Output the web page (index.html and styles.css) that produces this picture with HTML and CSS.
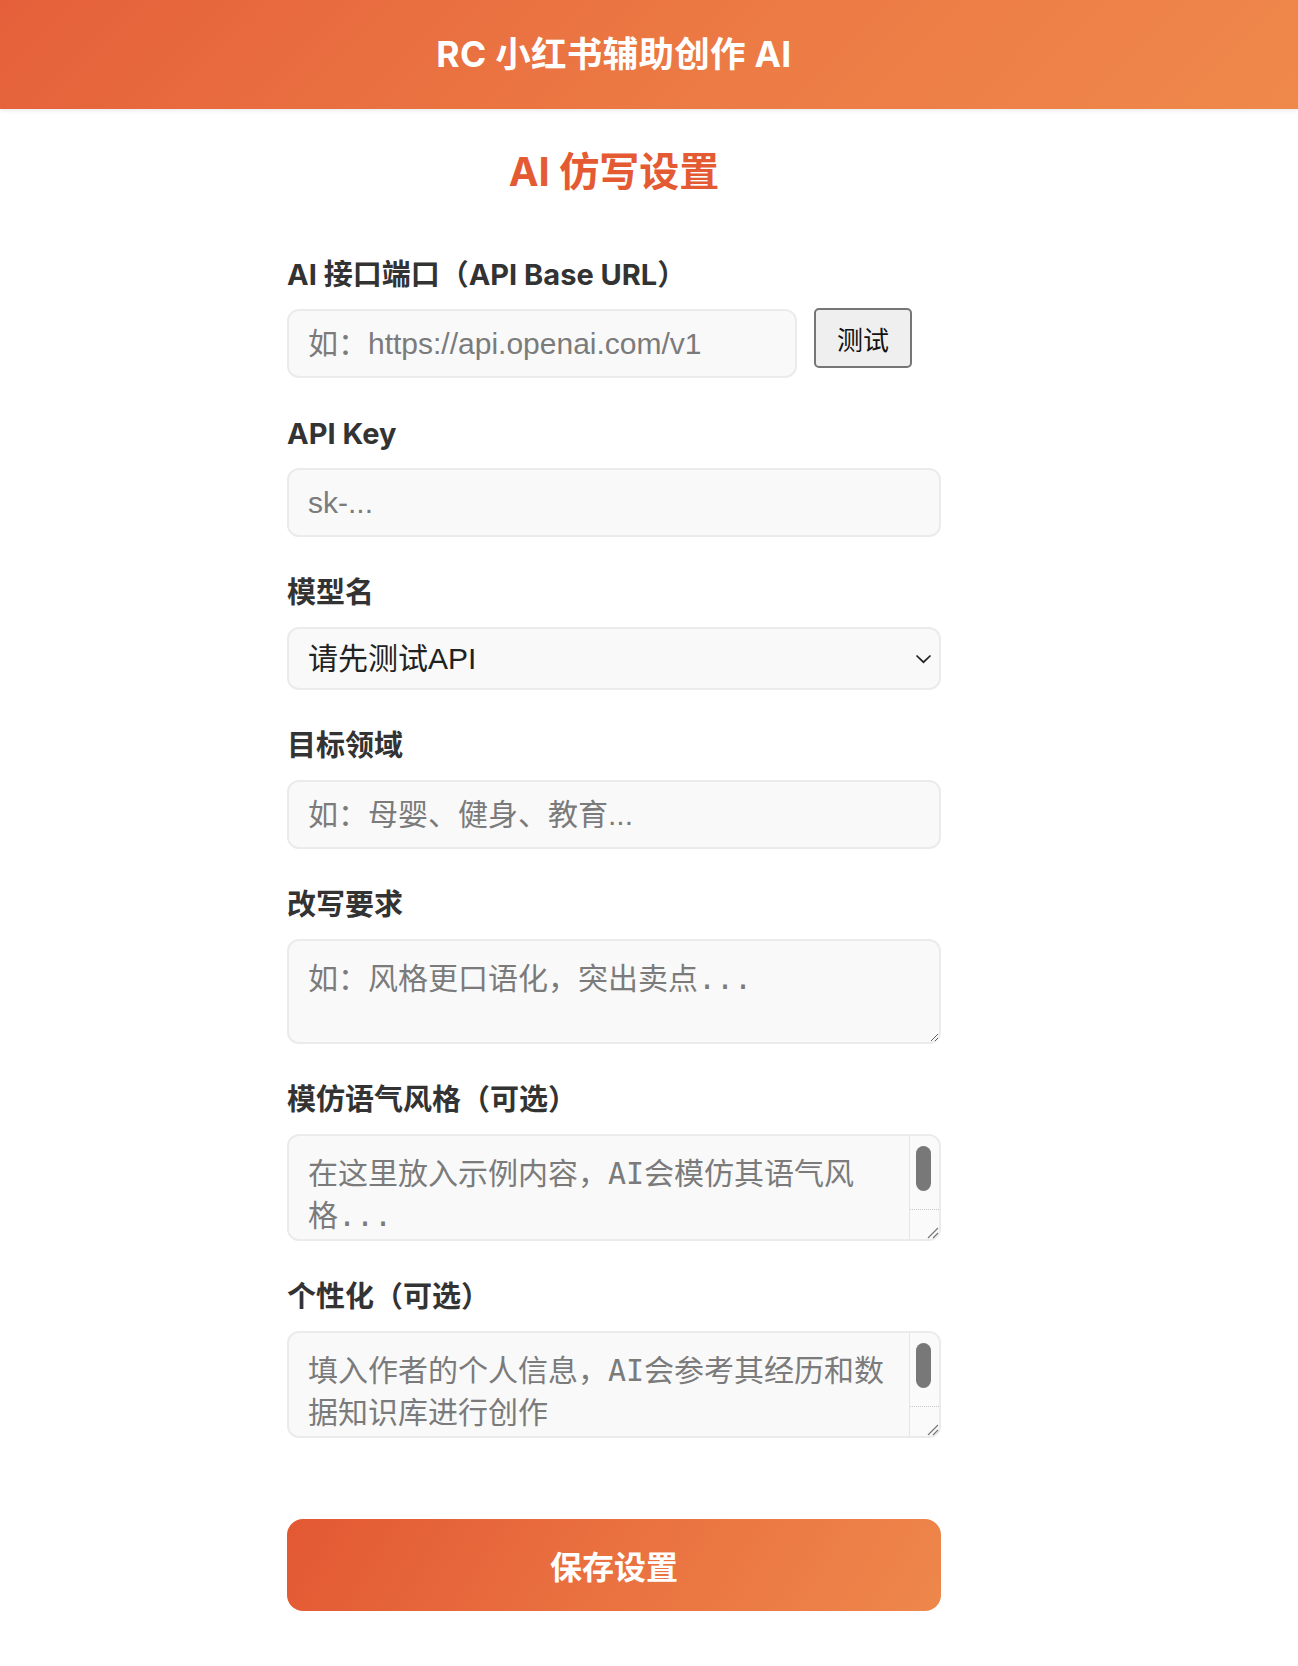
FILE: index.html
```html
<!DOCTYPE html>
<html lang="zh-CN">
<head>
    <meta charset="UTF-8">
    <meta name="viewport" content="width=device-width, initial-scale=1.0">
    <title>RC 小红书辅助创作 AI</title>
    <link rel="stylesheet" href="styles.css">
</head>

<body>
<header class="topbar">
    <h1>RC 小红书辅助创作 AI</h1>
</header>

<main class="settings">
    <h2 class="settings-title">AI 仿写设置</h2>

    <form id="settingsForm" class="settings-form">
        <div class="field">
            <label for="apiBase">AI 接口端口（API Base URL）</label>
            <div class="inline-row">
                <input type="text" id="apiBase" class="text-input base-input" placeholder="如：https://api.openai.com/v1">
                <button type="button" class="test-button">测试</button>
            </div>
        </div>

        <div class="field">
            <label for="apiKey">API Key</label>
            <input type="text" id="apiKey" class="text-input" placeholder="sk-...">
        </div>

        <div class="field">
            <label for="model">模型名</label>
            <div class="select-wrap">
                <select id="model" class="select-input">
                    <option>请先测试API</option>
                </select>
                <svg class="select-arrow" width="17" height="10" viewBox="0 0 17 10">
                    <path d="M1.5 1.5 L8.5 8.2 L15.5 1.5" fill="none" stroke="#222" stroke-width="1.7"/>
                </svg>
            </div>
        </div>

        <div class="field">
            <label for="domain">目标领域</label>
            <input type="text" id="domain" class="text-input" placeholder="如：母婴、健身、教育...">
        </div>

        <div class="field">
            <label for="rewrite">改写要求</label>
            <textarea id="rewrite" class="text-area" placeholder="如：风格更口语化，突出卖点..."></textarea>
        </div>

        <div class="field">
            <label for="tone">模仿语气风格（可选）</label>
            <div class="area-wrap">
                <textarea id="tone" class="text-area long-area" placeholder="在这里放入示例内容，AI会模仿其语气风格..."></textarea>
                <div class="scroll-rail">
                    <span class="scroll-thumb"></span>
                    <span class="scroll-corner">
                        <svg width="14" height="14" viewBox="0 0 14 14">
                            <path d="M3 13 L13 3 M8 13 L13 8" stroke="#777" stroke-width="1.2"/>
                        </svg>
                    </span>
                </div>
            </div>
        </div>

        <div class="field">
            <label for="persona">个性化（可选）</label>
            <div class="area-wrap">
                <textarea id="persona" class="text-area long-area" placeholder="填入作者的个人信息，AI会参考其经历和数据知识库进行创作"></textarea>
                <div class="scroll-rail">
                    <span class="scroll-thumb"></span>
                    <span class="scroll-corner">
                        <svg width="14" height="14" viewBox="0 0 14 14">
                            <path d="M3 13 L13 3 M8 13 L13 8" stroke="#777" stroke-width="1.2"/>
                        </svg>
                    </span>
                </div>
            </div>
        </div>

        <button type="submit" class="save-button">保存设置</button>
    </form>
</main>
</body>
</html>
```

FILE: styles.css
```css
body {
    margin: 0;
    background-color: #ffffff;
    font-family: "Inter", "Noto Sans CJK SC", sans-serif;
    color: #333333;
}

.topbar {
    height: 109px;
    box-sizing: border-box;
    padding: 0 70px 6px 0;
    display: flex;
    align-items: center;
    justify-content: center;
    background: linear-gradient(135deg, #e5603a 0%, #ec7a44 55%, #ef884b 100%);
    box-shadow: 0 2px 4px rgba(0, 0, 0, 0.08);
}

.topbar h1 {
    margin: 0;
    font-size: 35.5px;
    font-weight: 700;
    color: #ffffff;
    letter-spacing: 0.3px;
}

.settings {
    width: 654px;
    margin: 0 auto;
    padding-right: 70px;
}

.settings-title {
    margin: 38px 0 58px;
    font-size: 40px;
    line-height: 50px;
    font-weight: 700;
    color: #e45a32;
    text-align: center;
}

.field {
    margin-bottom: 36px;
}

.field label {
    display: block;
    margin-bottom: 14px;
    font-size: 29px;
    line-height: 40px;
    font-weight: 700;
    color: #333333;
}

.inline-row {
    display: flex;
    align-items: flex-start;
    gap: 17px;
}

.text-input,
.select-input,
.text-area {
    display: block;
    width: 100%;
    box-sizing: border-box;
    border: 2px solid #ebebeb;
    border-radius: 12px;
    background-color: #f9f9f9;
    color: #222222;
    outline: none;
}

.text-input,
.select-input {
    padding: 0 19px;
    font-family: "Liberation Sans", "Noto Sans CJK SC", sans-serif;
    font-size: 30px;
}

.text-input {
    height: 69px;
}

.base-input {
    width: 510px;
    flex: none;
}

.text-input::placeholder,
.text-area::placeholder {
    color: #7b7b7b;
}

.test-button {
    height: 60px;
    margin-top: -1px;
    padding: 0 21px;
    border: 2px solid #767676;
    border-radius: 5px;
    background-color: #efefef;
    color: #111111;
    font-family: "Liberation Sans", "Noto Sans CJK SC", sans-serif;
    font-size: 26px;
    cursor: pointer;
}

.select-wrap {
    position: relative;
}

.select-input {
    height: 63px;
    appearance: none;
    -webkit-appearance: none;
    cursor: pointer;
}

.select-arrow {
    position: absolute;
    right: 9px;
    top: 27px;
    pointer-events: none;
}

.text-area {
    height: 105px;
    padding: 17px 19px;
    font-family: "DejaVu Sans Mono", "Noto Sans CJK SC", monospace;
    font-size: 30px;
    line-height: 42px;
    resize: vertical;
}

.area-wrap {
    position: relative;
}

.long-area {
    height: 107px;
    padding-right: 49px;
    overflow: hidden;
    resize: none;
}

.scroll-rail {
    position: absolute;
    top: 2px;
    right: 2px;
    bottom: 2px;
    width: 29px;
    display: flex;
    flex-direction: column;
    background-color: #fafafa;
    border-left: 1px solid #e6e6e6;
    border-radius: 0 10px 10px 0;
    pointer-events: none;
}

.scroll-thumb {
    width: 15px;
    height: 45px;
    margin: 10px 0 0 6px;
    border-radius: 8px;
    background-color: #787878;
}

.scroll-corner {
    margin-top: auto;
    height: 29px;
    display: flex;
    align-items: flex-end;
    justify-content: flex-end;
    border-top: 1px dotted #c8c8c8;
}

.save-button {
    display: block;
    width: 100%;
    height: 92px;
    margin-top: 81px;
    border: none;
    border-radius: 16px;
    background: linear-gradient(120deg, #e25833 0%, #e96f3f 45%, #ee874b 100%);
    color: #ffffff;
    font-family: "Inter", "Noto Sans CJK SC", sans-serif;
    font-size: 32px;
    font-weight: 700;
    cursor: pointer;
}

.save-button:hover {
    background: linear-gradient(120deg, #d94f2b 0%, #e6683a 45%, #ea7d42 100%);
}
```
